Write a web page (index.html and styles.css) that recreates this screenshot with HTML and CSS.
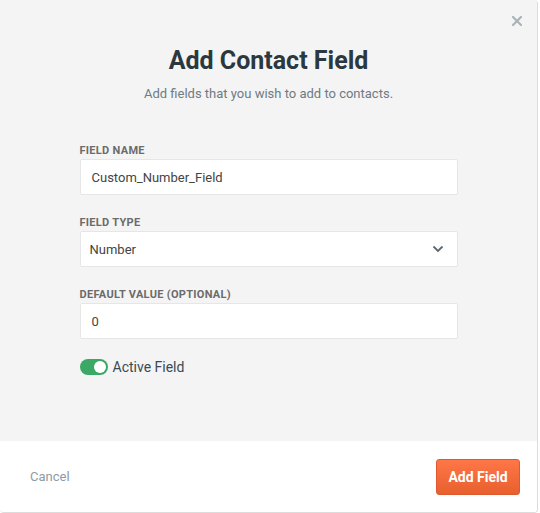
FILE: index.html
```html
<!DOCTYPE html>
<html>
<head>
<meta charset="utf-8">
<link rel="stylesheet" href="styles.css">
</head>
<body>
<div class="dialog">
  <button class="close" aria-label="Close">
    <svg width="10" height="10" viewBox="0 0 10 10"><path d="M1 1L9 9M9 1L1 9" stroke="#a9b4ba" stroke-width="2.2" stroke-linecap="square"/></svg>
  </button>
  <div class="body">
    <h1 class="title">Add Contact Field</h1>
    <p class="subtitle">Add fields that you wish to add to contacts.</p>
    <div class="form">
      <div class="field">
        <label class="label">FIELD NAME</label>
        <div class="input">Custom_Number_Field</div>
      </div>
      <div class="field">
        <label class="label">FIELD TYPE</label>
        <div class="input select">
          <span>Number</span>
          <svg width="12" height="8" viewBox="0 0 12 8"><path d="M1.5 1.5L6 6L10.5 1.5" fill="none" stroke="#5b6870" stroke-width="1.8"/></svg>
        </div>
      </div>
      <div class="field">
        <label class="label">DEFAULT VALUE (OPTIONAL)</label>
        <div class="input">0</div>
      </div>
      <div class="toggle-row">
        <span class="toggle"><span class="knob"></span></span>
        <span class="toggle-label">Active Field</span>
      </div>
    </div>
  </div>
  <div class="footer">
    <span class="cancel">Cancel</span>
    <button class="primary">Add Field</button>
  </div>
</div>
</body>
</html>
```
FILE: styles.css
```css
html, body {
  margin: 0;
  padding: 0;
  background: #ffffff;
  font-family: Roboto, "Liberation Sans", Arial, sans-serif;
}
.dialog {
  position: relative;
  width: 537px;
  height: 512px;
  border: 1px solid #dcdcdc;
  border-top: 0;
  border-left: 0;
  border-radius: 0 4px 4px 4px;
  display: flex;
  flex-direction: column;
  overflow: hidden;
}
.close {
  position: absolute;
  top: 16px;
  right: 15px;
  width: 10px;
  height: 10px;
  padding: 0;
  border: 0;
  background: none;
  display: flex;
}
.body {
  flex: 1;
  background: #f4f4f4;
  padding-top: 47px;
  display: flex;
  flex-direction: column;
  align-items: center;
}
.title {
  margin: 0;
  font-size: 25px;
  line-height: 28px;
  font-weight: 700;
  color: #2b3840;
}
.subtitle {
  margin: 10px 0 0;
  font-size: 13px;
  line-height: 18px;
  color: #6e7b84;
}
.form {
  width: 378px;
  margin-top: 41px;
  display: flex;
  flex-direction: column;
  gap: 21px;
}
.field {
  display: flex;
  flex-direction: column;
  gap: 1px;
}
.label {
  font-size: 11px;
  line-height: 14px;
  font-weight: 700;
  color: #6b6b6b;
  letter-spacing: 0.3px;
}
.input {
  box-sizing: border-box;
  height: 36px;
  background: #ffffff;
  border: 1px solid #e6e6e6;
  border-radius: 2px;
  padding: 0 11px;
  display: flex;
  align-items: center;
  font-size: 13px;
  color: #444444;
}
.select {
  justify-content: space-between;
  padding: 0 13px 0 9px;
}
.toggle-row {
  margin-top: -1px;
  display: flex;
  align-items: center;
  gap: 5px;
}
.toggle {
  box-sizing: border-box;
  width: 28px;
  height: 16px;
  border-radius: 8px;
  background: #3ca865;
  display: flex;
  justify-content: flex-end;
  align-items: center;
  padding: 2px;
}
.knob {
  width: 12px;
  height: 12px;
  border-radius: 50%;
  background: #ffffff;
}
.toggle-label {
  font-size: 14px;
  line-height: 16px;
  color: #3c4a52;
}
.footer {
  height: 71px;
  flex: none;
  background: #ffffff;
  display: flex;
  align-items: center;
  justify-content: space-between;
  padding: 0 17px 0 30px;
}
.cancel {
  font-size: 13px;
  color: #8d9ba4;
}
.primary {
  width: 84px;
  height: 36px;
  border: 1px solid #dd5a30;
  border-radius: 3px;
  background: linear-gradient(#ff7647, #e9602f);
  color: #ffffff;
  font-family: Roboto, "Liberation Sans", Arial, sans-serif;
  font-size: 14px;
  font-weight: 700;
  padding: 0;
}
```
